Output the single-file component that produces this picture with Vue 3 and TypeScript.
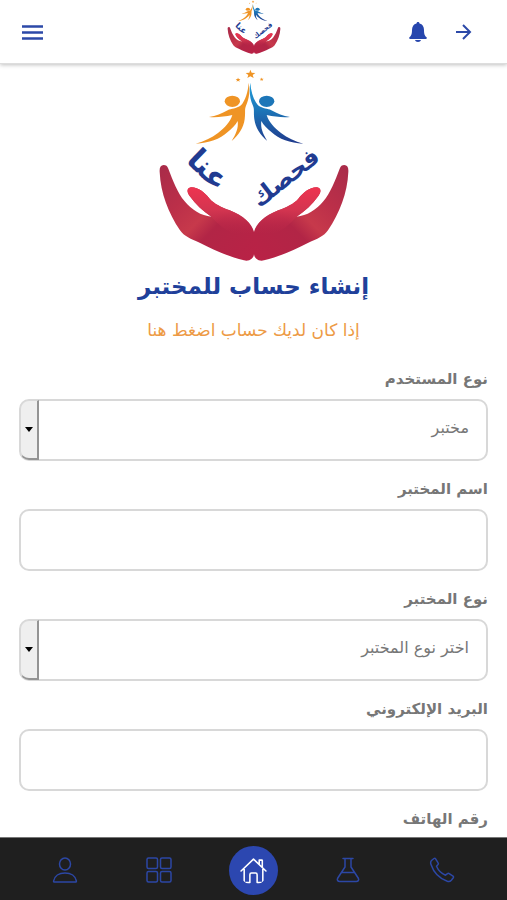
<script setup lang="ts">
import { defineComponent, h, ref } from 'vue'

interface Field {
  id: string
  label: string
  kind: 'select' | 'text' | 'email' | 'tel'
  options?: string[]
}

const fields: Field[] = [
  { id: 'user-type', label: 'نوع المستخدم', kind: 'select', options: ['مختبر'] },
  { id: 'lab-name', label: 'اسم المختبر', kind: 'text' },
  { id: 'lab-type', label: 'نوع المختبر', kind: 'select', options: ['اختر نوع المختبر'] },
  { id: 'email', label: 'البريد الإلكتروني', kind: 'email' },
  { id: 'phone', label: 'رقم الهاتف', kind: 'tel' },
]

const values = ref<Record<string, string>>({
  'user-type': 'مختبر',
  'lab-name': '',
  'lab-type': 'اختر نوع المختبر',
  email: '',
  phone: '',
})

const palm =
  'M42 315C33 315 29 323 30 336C33 400 56 458 91 511C103 529 124 537 150 548C190 568 235 590 283 601C298 605 313 596 313 581L313 516C306 490 282 468 240 451C215 441 194 432 180 416C164 397 145 381 124 382C111 384 111 396 120 408C138 434 160 453 185 470C155 468 125 449 105 424C83 397 70 362 56 326C53 318 49 315 42 315Z'
const thumb =
  'M124 382C111 384 111 396 120 408C138 434 160 453 185 470C205 490 235 530 313 530L313 516C306 490 282 468 240 451C215 441 194 432 180 416C164 397 145 381 124 382Z'
const figure =
  'M297 68C295 96 287 121 274 136C259 147 245 145 234 151C216 161 199 168 178 171C202 173 224 170 248 165C241 187 225 204 205 219C185 234 164 244 138 251C178 249 211 238 234 216C246 206 258 196 264 183C267 206 258 223 246 243C267 226 282 203 285 178C288 153 284 150 289 137C299 116 301 92 297 68Z'
const star = 'M302 29L306 38L317 39L309 45L312 54L302 49L293 54L296 45L288 39L299 38Z'

const BrandLogo = defineComponent({
  props: { uid: { type: String, required: true } },
  setup(props) {
    const gradient = (name: string, stops: [string, string, number?][], diagonal = false) =>
      h(
        'linearGradient',
        { id: `${props.uid}-${name}`, x1: 0, y1: 0, x2: diagonal ? 1 : 0, y2: 1 },
        stops.map(([offset, color, opacity]) =>
          h('stop', { offset, 'stop-color': color, 'stop-opacity': opacity ?? 1 }),
        ),
      )
    const fill = (name: string) => `url(#${props.uid}-${name})`
    const hand = () => [
      h('path', { d: palm, fill: fill('palm') }),
      h('path', { d: thumb, fill: fill('thumb') }),
    ]
    const word = (text: string, transform: string, size: number) =>
      h(
        'text',
        {
          transform,
          fill: '#213b91',
          'font-family': '"DejaVu Sans", sans-serif',
          'font-weight': 700,
          'font-size': size,
          'text-anchor': 'middle',
        },
        text,
      )
    return () =>
      h('svg', { viewBox: '25 25 576 580', role: 'img', 'aria-label': 'فحصك عنا' }, [
        h('defs', [
          gradient('palm', [['0', '#a82b49'], ['0.3', '#bb2f49'], ['0.5', '#c7394b'], ['0.62', '#b22546'], ['1', '#b92246']], true),
          gradient('thumb', [['0', '#ee3450'], ['0.45', '#d43550'], ['1', '#b32346', 0]]),
          gradient('blue', [['0', '#23a0dc'], ['0.45', '#1c76b8'], ['1', '#203a8c']]),
        ]),
        h('g', hand()),
        h('g', { transform: 'translate(626 0) scale(-1 1)' }, hand()),
        h('g', { fill: '#ef9425' }, [
          h('path', { d: star }),
          h('path', { d: star, transform: 'translate(114 38) scale(.5)' }),
          h('path', { d: star, transform: 'translate(215 41) scale(.4)' }),
          h('ellipse', { cx: 248, cy: 124, rx: 23, ry: 17 }),
          h('path', { d: figure }),
        ]),
        h('ellipse', { cx: 351, cy: 124, rx: 23, ry: 17, fill: '#1c76b8' }),
        h('path', { d: figure, transform: 'translate(599 0) scale(-1 1)', fill: fill('blue') }),
        word('عنا', 'translate(154 350) rotate(44)', 90),
        word('فحصك', 'translate(422 372) rotate(-38)', 72),
      ])
  },
})
</script>

<template>
  <div class="app" dir="rtl" lang="ar">
    <header class="topbar">
      <div class="actions">
        <button type="button" class="icon-button" aria-label="رجوع">
          <svg class="arrow" viewBox="0 0 18 18"><path d="M2 9h14M9 2l7 7-7 7" /></svg>
        </button>
        <button type="button" class="icon-button" aria-label="الإشعارات">
          <svg class="bell" viewBox="0 0 18 20">
            <path d="M9 0c1 0 1.500.6 1.500 1.500C13.500 2.200 15 4.600 15 8c0 4.500 1 6 2.500 7.200.8.800.4 1.800-.5 1.800H1c-.9 0-1.300-1-.5-1.800C2 14 3 12.500 3 8c0-3.400 1.500-5.800 4.500-6.500C7.500.6 8 0 9 0ZM6 18h6c-.3 1.300-1.500 2-3 2s-2.700-.7-3-2Z" />
          </svg>
        </button>
      </div>
      <BrandLogo uid="small" class="topbar-logo" />
      <div class="menu">
        <button type="button" class="icon-button" aria-label="القائمة">
          <svg class="burger" viewBox="0 0 21 15"><path d="M0 1.500h21M0 7.500h21M0 13.500h21" /></svg>
        </button>
      </div>
    </header>

    <main class="content">
      <BrandLogo uid="large" class="hero-logo" />
      <h1>إنشاء حساب للمختبر</h1>
      <a class="login" href="#login">إذا كان لديك حساب اضغط هنا</a>
      <form class="form" @submit.prevent>
        <div v-for="field in fields" :key="field.id" class="field">
          <label :for="field.id">{{ field.label }}</label>
          <div v-if="field.kind === 'select'" class="select">
            <select :id="field.id" v-model="values[field.id]" class="control">
              <option v-for="option in field.options" :key="option">{{ option }}</option>
            </select>
            <span class="caret" aria-hidden="true">
              <svg viewBox="0 0 8 5"><path d="M0 0h8L4 5z" /></svg>
            </span>
          </div>
          <input v-else :id="field.id" v-model="values[field.id]" :type="field.kind" class="control" />
        </div>
      </form>
    </main>

    <nav class="tabs">
      <a href="#contact" aria-label="اتصل بنا">
        <svg viewBox="0 0 26 26"><path d="M2.500 3.500 5 1.500c.6-.4 1.200-.3 1.600.3l2.500 4c.4.600.3 1.200-.1 1.700L7.500 9.200c1.500 3.500 5 7.300 9 9l2-1.500c.5-.4 1.100-.5 1.700-.1l3.800 2.500c.6.400.7 1 .3 1.600l-2 2.600c-1 1.200-2.500 1.500-4 1C10.500 21.500 4.500 15 2 7.500c-.5-1.500-.5-3 .5-4Z" /></svg>
      </a>
      <a href="#labs" aria-label="المختبرات">
        <svg viewBox="0 0 26 26"><path d="M8 1.500h10M10 2v8L2.800 21c-1.200 2 0 3.500 2 3.500h16.400c2 0 3.200-1.500 2-3.500L16 10V2M6.500 15.500h13" /></svg>
      </a>
      <a href="#home" class="home" aria-label="الرئيسية">
        <svg viewBox="0 0 28 28"><path d="M2 14.500 14 3 26 14.500M5 12.500v13h5.500V18c0-1 .5-1.500 1.500-1.500h4c1 0 1.500.5 1.500 1.500v7.500H23v-13M19.500 8V4H22.500V11" /></svg>
      </a>
      <a href="#services" aria-label="الخدمات">
        <svg viewBox="0 0 26 26">
          <rect x="1" y="1" width="10.500" height="10.500" rx="1.500" /><rect x="14.500" y="1" width="10.500" height="10.500" rx="1.500" />
          <rect x="1" y="14.500" width="10.500" height="10.500" rx="1.500" /><rect x="14.500" y="14.500" width="10.500" height="10.500" rx="1.500" />
        </svg>
      </a>
      <a href="#profile" aria-label="حسابي">
        <svg viewBox="0 0 26 26"><ellipse cx="13" cy="7" rx="5.500" ry="6" /><path d="M2.500 25c-.7 0-1-.4-.9-1C2.500 19 7 16 13 16s10.500 3 11.400 8c.1.600-.2 1-.9 1Z" /></svg>
      </a>
    </nav>
  </div>
</template>

<style>
body {
  margin: 0;
  background: #fff;
}
</style>

<style scoped>
.app {
  display: flex;
  flex-direction: column;
  height: 100vh;
  overflow: hidden;
  background: #fff;
  font-family: "DejaVu Sans", sans-serif;
}

.topbar {
  display: grid;
  grid-template-columns: 1fr auto 1fr;
  align-items: center;
  flex: none;
  height: 64px;
  padding: 0 20px;
  border-bottom: 1px solid #ddd;
  box-shadow: 0 1px 4px rgb(0 0 0 / 25%);
  box-sizing: border-box;
}

.topbar-logo {
  width: 54px;
  height: 54px;
  margin-bottom: 10px;
}

.actions {
  display: flex;
  gap: 20px;
  padding: 0 12px;
}

.menu {
  display: flex;
  justify-content: flex-end;
}

.icon-button {
  display: flex;
  align-items: center;
  justify-content: center;
  width: 25px;
  height: 30px;
  padding: 0;
  border: 0;
  background: none;
  cursor: pointer;
}

.icon-button svg {
  flex: none;
  fill: none;
  stroke: #2c49a8;
  stroke-width: 2;
}

.icon-button .arrow {
  width: 18px;
  height: 18px;
}

.icon-button .bell {
  width: 18px;
  height: 20px;
  fill: #2746ad;
  stroke: none;
}

.icon-button .burger {
  width: 21px;
  height: 15px;
  stroke-width: 2.5;
}

.content {
  display: flex;
  flex: 1;
  flex-direction: column;
  align-items: center;
  min-height: 0;
  padding: 4px 19px 0;
  overflow-y: auto;
  scrollbar-width: none;
}

.hero-logo {
  flex: none;
  width: 192px;
  height: 194px;
}

h1 {
  margin: 8px 0 0;
  color: #20409a;
  font-size: 23px;
  line-height: 32px;
}

.login {
  margin-top: 16px;
  color: #ed9a45;
  font-size: 17px;
  line-height: 24px;
  text-decoration: none;
}

.form {
  display: flex;
  flex-direction: column;
  gap: 16px;
  width: 100%;
  margin-top: 25px;
}

.field {
  display: flex;
  flex-direction: column;
  gap: 8px;
}

label {
  color: #777;
  font-size: 15px;
  font-weight: 700;
  line-height: 24px;
}

.control {
  display: block;
  width: 100%;
  height: 62px;
  padding: 0 17px 4px;
  border: 2px solid #d8d8d8;
  border-radius: 10px;
  background: #fff;
  color: #777;
  font: 16px/24px "DejaVu Sans", sans-serif;
  box-sizing: border-box;
  appearance: none;
}

.select {
  position: relative;
}

.caret {
  position: absolute;
  top: 1px;
  bottom: 1px;
  left: 1px;
  display: flex;
  align-items: center;
  justify-content: center;
  width: 19px;
  border: 1px solid #d8d8d8;
  border-right: 2px solid #949494;
  border-bottom: 2px solid #949494;
  border-radius: 9px 0 0 9px;
  background: #efefef;
  box-sizing: border-box;
  pointer-events: none;
}

.caret svg {
  width: 8px;
  height: 5px;
}

.tabs {
  display: flex;
  flex: none;
  align-items: center;
  height: 63px;
  padding: 2px 18px 0;
  border-top: 1px solid #777;
  background: #1f1f1f;
  box-sizing: border-box;
}

.tabs a {
  display: flex;
  flex: 1;
  align-items: center;
  justify-content: center;
}

.tabs svg {
  width: 26px;
  height: 26px;
  fill: none;
  stroke: #2c47a5;
  stroke-linecap: round;
  stroke-linejoin: round;
  stroke-width: 1.5;
}

.tabs .home svg {
  width: 29px;
  height: 29px;
  padding: 10px;
  border-radius: 50%;
  background: #2c47b0;
  stroke: #fff;
}
</style>
